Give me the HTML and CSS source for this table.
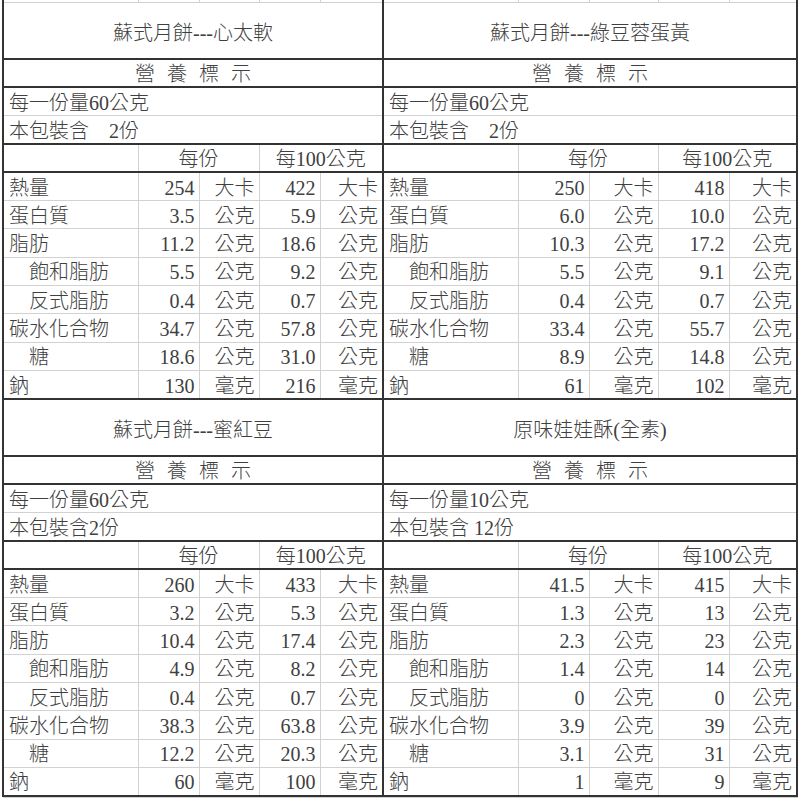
FILE: index.html
```html
<!DOCTYPE html>
<html lang="zh-Hant">
<head>
<meta charset="utf-8">
<title>營養標示</title>
<link rel="stylesheet" href="styles.css">
</head>
<body>
<table class="sheet">
  <colgroup>
    <col class="c-lb"><col class="c-a"><col class="c-b"><col class="c-a"><col class="c-e">
    <col class="c-lb"><col class="c-f"><col class="c-g"><col class="c-f"><col class="c-h">
  </colgroup>
  <tbody>
    <tr class="strip">
      <td class="pl"></td><td></td><td></td><td></td><td class="pr"></td>
      <td class="pl"></td><td></td><td></td><td></td><td class="pr"></td>
    </tr>

    <!-- block 1 -->
    <tr class="r-title">
      <td colspan="5" class="title pl pr">蘇式月餅---心太軟</td>
      <td colspan="5" class="title pl pr">蘇式月餅---綠豆蓉蛋黃</td>
    </tr>
    <tr class="r">
      <td colspan="5" class="nl pl pr">營養標示</td>
      <td colspan="5" class="nl pl pr">營養標示</td>
    </tr>
    <tr class="r">
      <td colspan="5" class="info light pl pr">每一份量60公克</td>
      <td colspan="5" class="info light pl pr">每一份量60公克</td>
    </tr>
    <tr class="r">
      <td colspan="5" class="info dark pl pr">本包裝含　2份</td>
      <td colspan="5" class="info dark pl pr">本包裝含　2份</td>
    </tr>
    <tr class="r hd">
      <td class="pl"></td><td colspan="2">每份</td><td colspan="2" class="pr">每100公克</td>
      <td class="pl"></td><td colspan="2">每份</td><td colspan="2" class="pr">每100公克</td>
    </tr>
    <tr class="r">
      <td class="lb pl">熱量</td><td class="n">254</td><td class="u">大卡</td><td class="n">422</td><td class="u pr">大卡</td>
      <td class="lb pl">熱量</td><td class="n">250</td><td class="u">大卡</td><td class="n">418</td><td class="u pr">大卡</td>
    </tr>
    <tr class="r">
      <td class="lb pl">蛋白質</td><td class="n">3.5</td><td class="u">公克</td><td class="n">5.9</td><td class="u pr">公克</td>
      <td class="lb pl">蛋白質</td><td class="n">6.0</td><td class="u">公克</td><td class="n">10.0</td><td class="u pr">公克</td>
    </tr>
    <tr class="r">
      <td class="lb pl">脂肪</td><td class="n">11.2</td><td class="u">公克</td><td class="n">18.6</td><td class="u pr">公克</td>
      <td class="lb pl">脂肪</td><td class="n">10.3</td><td class="u">公克</td><td class="n">17.2</td><td class="u pr">公克</td>
    </tr>
    <tr class="r">
      <td class="lb sub pl">飽和脂肪</td><td class="n">5.5</td><td class="u">公克</td><td class="n">9.2</td><td class="u pr">公克</td>
      <td class="lb sub pl">飽和脂肪</td><td class="n">5.5</td><td class="u">公克</td><td class="n">9.1</td><td class="u pr">公克</td>
    </tr>
    <tr class="r">
      <td class="lb sub pl">反式脂肪</td><td class="n">0.4</td><td class="u">公克</td><td class="n">0.7</td><td class="u pr">公克</td>
      <td class="lb sub pl">反式脂肪</td><td class="n">0.4</td><td class="u">公克</td><td class="n">0.7</td><td class="u pr">公克</td>
    </tr>
    <tr class="r">
      <td class="lb pl">碳水化合物</td><td class="n">34.7</td><td class="u">公克</td><td class="n">57.8</td><td class="u pr">公克</td>
      <td class="lb pl">碳水化合物</td><td class="n">33.4</td><td class="u">公克</td><td class="n">55.7</td><td class="u pr">公克</td>
    </tr>
    <tr class="r">
      <td class="lb sub pl">糖</td><td class="n">18.6</td><td class="u">公克</td><td class="n">31.0</td><td class="u pr">公克</td>
      <td class="lb sub pl">糖</td><td class="n">8.9</td><td class="u">公克</td><td class="n">14.8</td><td class="u pr">公克</td>
    </tr>
    <tr class="r last">
      <td class="lb pl">鈉</td><td class="n">130</td><td class="u">毫克</td><td class="n">216</td><td class="u pr">毫克</td>
      <td class="lb pl">鈉</td><td class="n">61</td><td class="u">毫克</td><td class="n">102</td><td class="u pr">毫克</td>
    </tr>

    <!-- block 2 -->
    <tr class="r-title">
      <td colspan="5" class="title pl pr">蘇式月餅---蜜紅豆</td>
      <td colspan="5" class="title pl pr">原味娃娃酥(全素)</td>
    </tr>
    <tr class="r">
      <td colspan="5" class="nl pl pr">營養標示</td>
      <td colspan="5" class="nl pl pr">營養標示</td>
    </tr>
    <tr class="r">
      <td colspan="5" class="info light pl pr">每一份量60公克</td>
      <td colspan="5" class="info light pl pr">每一份量10公克</td>
    </tr>
    <tr class="r">
      <td colspan="5" class="info dark pl pr">本包裝含2份</td>
      <td colspan="5" class="info dark pl pr">本包裝含 12份</td>
    </tr>
    <tr class="r hd">
      <td class="pl"></td><td colspan="2">每份</td><td colspan="2" class="pr">每100公克</td>
      <td class="pl"></td><td colspan="2">每份</td><td colspan="2" class="pr">每100公克</td>
    </tr>
    <tr class="r">
      <td class="lb pl">熱量</td><td class="n">260</td><td class="u">大卡</td><td class="n">433</td><td class="u pr">大卡</td>
      <td class="lb pl">熱量</td><td class="n">41.5</td><td class="u">大卡</td><td class="n">415</td><td class="u pr">大卡</td>
    </tr>
    <tr class="r">
      <td class="lb pl">蛋白質</td><td class="n">3.2</td><td class="u">公克</td><td class="n">5.3</td><td class="u pr">公克</td>
      <td class="lb pl">蛋白質</td><td class="n">1.3</td><td class="u">公克</td><td class="n">13</td><td class="u pr">公克</td>
    </tr>
    <tr class="r">
      <td class="lb pl">脂肪</td><td class="n">10.4</td><td class="u">公克</td><td class="n">17.4</td><td class="u pr">公克</td>
      <td class="lb pl">脂肪</td><td class="n">2.3</td><td class="u">公克</td><td class="n">23</td><td class="u pr">公克</td>
    </tr>
    <tr class="r">
      <td class="lb sub pl">飽和脂肪</td><td class="n">4.9</td><td class="u">公克</td><td class="n">8.2</td><td class="u pr">公克</td>
      <td class="lb sub pl">飽和脂肪</td><td class="n">1.4</td><td class="u">公克</td><td class="n">14</td><td class="u pr">公克</td>
    </tr>
    <tr class="r">
      <td class="lb sub pl">反式脂肪</td><td class="n">0.4</td><td class="u">公克</td><td class="n">0.7</td><td class="u pr">公克</td>
      <td class="lb sub pl">反式脂肪</td><td class="n">0</td><td class="u">公克</td><td class="n">0</td><td class="u pr">公克</td>
    </tr>
    <tr class="r">
      <td class="lb pl">碳水化合物</td><td class="n">38.3</td><td class="u">公克</td><td class="n">63.8</td><td class="u pr">公克</td>
      <td class="lb pl">碳水化合物</td><td class="n">3.9</td><td class="u">公克</td><td class="n">39</td><td class="u pr">公克</td>
    </tr>
    <tr class="r">
      <td class="lb sub pl">糖</td><td class="n">12.2</td><td class="u">公克</td><td class="n">20.3</td><td class="u pr">公克</td>
      <td class="lb sub pl">糖</td><td class="n">3.1</td><td class="u">公克</td><td class="n">31</td><td class="u pr">公克</td>
    </tr>
    <tr class="r last">
      <td class="lb pl">鈉</td><td class="n">60</td><td class="u">毫克</td><td class="n">100</td><td class="u pr">毫克</td>
      <td class="lb pl">鈉</td><td class="n">1</td><td class="u">毫克</td><td class="n">9</td><td class="u pr">毫克</td>
    </tr>

    <tr class="strip">
      <td></td><td></td><td></td><td></td><td></td>
      <td></td><td></td><td></td><td></td><td></td>
    </tr>
  </tbody>
</table>
</body>
</html>
```

FILE: styles.css
```css
html, body {
  margin: 0;
  padding: 0;
  background: #ffffff;
}

body {
  font-family: "Liberation Serif", "Noto Sans CJK TC", serif;
  font-size: 20px;
  color: #404040;
}

.sheet {
  border-collapse: collapse;
  table-layout: fixed;
  width: 796px;
  margin-left: 2px;
}

.c-lb { width: 135px; }
.c-a { width: 61px; }
.c-b { width: 60px; }
.c-e { width: 63px; }
.c-f { width: 71px; }
.c-g { width: 69px; }
.c-h { width: 68px; }

.sheet td {
  border: 1px solid #d2d2d2;
  padding: 0 4px;
  line-height: 20px;
  white-space: nowrap;
  overflow: hidden;
  vertical-align: middle;
  font-weight: 300;
}

.strip { height: 2px; }

.strip td {
  padding: 0;
  line-height: 0;
  font-size: 0;
  border-top: none;
}

.r-title { height: 57px; }

.r-title td { padding-top: 6px; }

.r { height: 28.33px; }

.r td { padding-top: 2px; }

.pl { border-left: 2px solid #333333 !important; }
.pr { border-right: 2px solid #333333 !important; }

.title {
  text-align: center;
  border-bottom: 2px solid #333333 !important;
}

.nl {
  text-align: center;
  letter-spacing: 12px;
  text-indent: 12px;
  border-bottom: 2px solid #333333 !important;
}

.info {
  text-align: left;
  padding-left: 5px !important;
}

.info.light { border-bottom: 1px solid #d2d2d2; }
.info.dark { border-bottom: 2px solid #333333 !important; }

.hd td {
  text-align: center;
  border-bottom: 2px solid #333333 !important;
}

.lb {
  text-align: left;
  padding-left: 5px !important;
}

.lb.sub { padding-left: 25px !important; }

.n { text-align: right; }
.u { text-align: right; }

.last td { border-bottom: 2px solid #333333 !important; }
```
